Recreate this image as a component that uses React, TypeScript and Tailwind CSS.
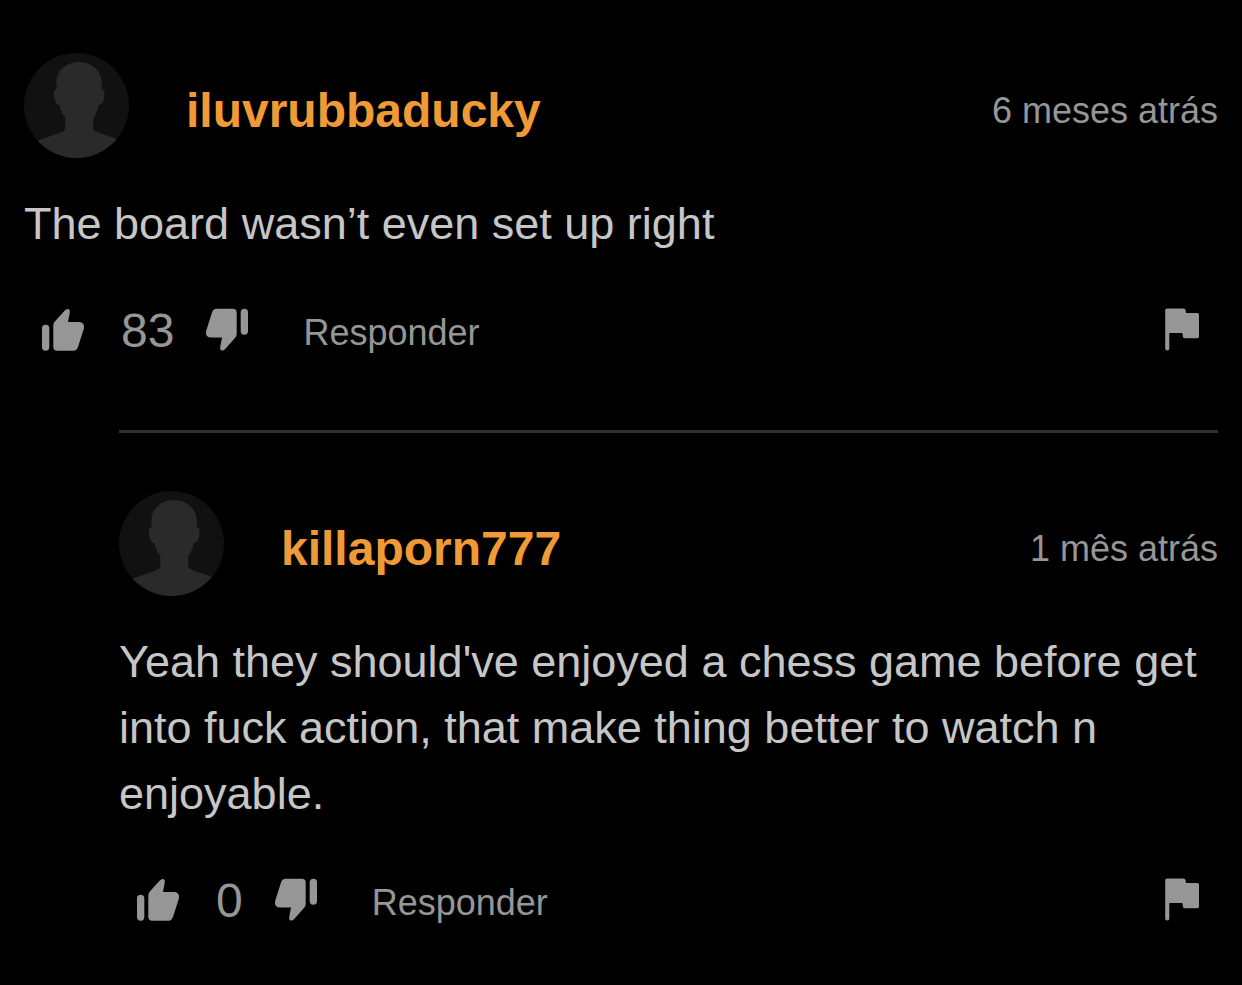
import type { ReactNode } from "react"

type CommentData = {
  user: string
  date: string
  text: string
  votes: number
}

const comment: CommentData = {
  user: "iluvrubbaducky",
  date: "6 meses atrás",
  text: "The board wasn’t even set up right",
  votes: 83,
}

const reply: CommentData = {
  user: "killaporn777",
  date: "1 mês atrás",
  text: "Yeah they should've enjoyed a chess game before get into fuck action, that make thing better to watch n enjoyable.",
  votes: 0,
}

function Avatar() {
  return (
    <svg viewBox="0 0 105 105" className="size-[105px] shrink-0 rounded-full bg-[#111111]" aria-hidden="true">
      <path
        fill="#2a2a2a"
        d="M55 9C42 9 32.300 18 32.300 30L32.700 36C29.500 37 29 41 30.300 45C31.500 49 33 52 35.700 52.500C36.500 58 38.500 61 41.300 65V77C33 82 22 84 14 87.700V105H93V86C86 83.500 77 81 69.300 77V65C72 61 73.500 58 74.500 52.500C77 52 79 50 80 46C81.300 41 80.500 37 77.700 36V30C77.700 18 68 9 55 9Z"
      />
    </svg>
  )
}

function Thumb({ down = false }: { down?: boolean }) {
  return (
    <svg viewBox="0 0 48 48" className="size-12" fill="currentColor" aria-hidden="true">
      <g transform={down ? "rotate(180 23 22.7)" : undefined}>
        <rect x="2" y="17.700" width="7.300" height="26" rx="3.600" />
        <path d="M13.300 18.500Q13.300 16.200 14.800 14.600L24.800 3.400Q27 1.200 28.900 2.200Q30.300 3.200 29.700 6L28 15H39.500Q44.800 15.500 43.900 21.500L38 40Q36.700 43.700 33.500 43.700H17.300Q13.300 43.700 13.300 39.700Z" />
      </g>
    </svg>
  )
}

function Flag() {
  return (
    <svg viewBox="0 0 48 48" className="size-12" fill="currentColor" aria-hidden="true">
      <path d="M9 1.400H25.500Q27.300 1.400 27.500 3L28 6H39.200Q41 6 41 7.800V29.500Q41 31.300 39.200 31.300H26.800Q25.300 31.300 25 29.800L24.300 26H11.300V41.500Q11.300 43.400 9.300 43.400Q7.200 43.400 7.200 41.500V3.200Q7.200 1.400 9 1.400Z" />
    </svg>
  )
}

function IconButton({ label, className = "", children }: { label: string; className?: string; children: ReactNode }) {
  return (
    <button type="button" aria-label={label} className={`shrink-0 cursor-pointer ${className}`}>
      {children}
    </button>
  )
}

function Comment({ data }: { data: CommentData }) {
  return (
    <article>
      <header className="flex h-[116px]">
        <Avatar />
        <div className="flex flex-1 items-center justify-between pl-[57px]">
          <a href="#profile" className="text-[48px] leading-[56px] font-bold text-[#f09a37]">
            {data.user}
          </a>
          <time className="text-[36px] leading-[40px] text-[#969696]">{data.date}</time>
        </div>
      </header>
      <p className="mt-[22px] text-[45px] leading-[66px] text-[#c6c6c6]">{data.text}</p>
      <div className="mt-[50px] flex h-12 items-center pr-3 pl-4 text-[#969696]">
        <IconButton label="Gostei">
          <Thumb />
        </IconButton>
        <span className="pr-[30px] pl-[33px] text-[48px] leading-[50px]">{data.votes}</span>
        <IconButton label="Não gostei">
          <Thumb down />
        </IconButton>
        <button type="button" className="ml-[51px] cursor-pointer pt-1 text-[36px] leading-[48px]">
          Responder
        </button>
        <IconButton label="Denunciar" className="ml-auto">
          <Flag />
        </IconButton>
      </div>
    </article>
  )
}

export default function App() {
  return (
    <main className="min-h-screen bg-black px-6 pt-[53px] pb-[60px] font-['Liberation_Sans',Arial,sans-serif]">
      <Comment data={comment} />
      <section className="mt-[75px] ml-[95px] border-t-[3px] border-[#303030] pt-[58px]">
        <Comment data={reply} />
      </section>
    </main>
  )
}
